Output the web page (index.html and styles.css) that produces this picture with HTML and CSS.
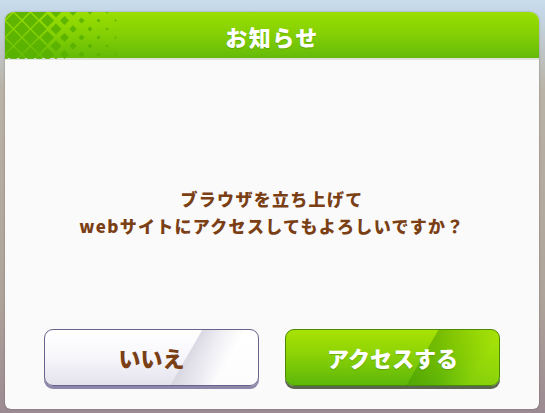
FILE: index.html
```html
<!DOCTYPE html>
<html lang="ja">
<head>
<meta charset="utf-8">
<link rel="stylesheet" href="styles.css">
</head>
<body>
<div class="dialog">
  <div class="header">
    <svg class="pattern" width="130" height="47" viewBox="0 0 130 47">
      <defs><path id="d" d="M0,-1 L1,0 L0,1 L-1,0Z"/></defs>
      <g fill="#58b000" opacity="0.85">
        <use href="#d" transform="translate(0,0) scale(7.5)"/>
        <use href="#d" transform="translate(17,0) scale(7.5)"/>
        <use href="#d" transform="translate(34,0) scale(7.5)"/>
        <use href="#d" transform="translate(51,0) scale(5.5)"/>
        <use href="#d" transform="translate(68,0) scale(3.7)"/>
        <use href="#d" transform="translate(85,0) scale(2.4)"/>
        <use href="#d" transform="translate(102,0) scale(1.6)"/>

        <use href="#d" transform="translate(8.5,8.5) scale(7.5)"/>
        <use href="#d" transform="translate(25.5,8.5) scale(7.5)"/>
        <use href="#d" transform="translate(42.5,8.5) scale(6.5)"/>
        <use href="#d" transform="translate(59.5,8.5) scale(4.5)"/>
        <use href="#d" transform="translate(76.5,8.5) scale(3)"/>
        <use href="#d" transform="translate(93.5,8.5) scale(2)"/>
        <use href="#d" transform="translate(110.5,8.5) scale(1.2)"/>

        <use href="#d" transform="translate(0,17) scale(7.5)"/>
        <use href="#d" transform="translate(17,17) scale(7.5)"/>
        <use href="#d" transform="translate(34,17) scale(7.5)"/>
        <use href="#d" transform="translate(51,17) scale(5.5)"/>
        <use href="#d" transform="translate(68,17) scale(3.7)"/>
        <use href="#d" transform="translate(85,17) scale(2.4)"/>
        <use href="#d" transform="translate(102,17) scale(1.6)"/>

        <use href="#d" transform="translate(8.5,25.5) scale(7.5)"/>
        <use href="#d" transform="translate(25.5,25.5) scale(7.5)"/>
        <use href="#d" transform="translate(42.5,25.5) scale(6.5)"/>
        <use href="#d" transform="translate(59.5,25.5) scale(4.5)"/>
        <use href="#d" transform="translate(76.5,25.5) scale(3)"/>
        <use href="#d" transform="translate(93.5,25.5) scale(2)"/>
        <use href="#d" transform="translate(110.5,25.5) scale(1.2)"/>

        <use href="#d" transform="translate(0,34) scale(7.5)"/>
        <use href="#d" transform="translate(17,34) scale(7.5)"/>
        <use href="#d" transform="translate(34,34) scale(7.5)"/>
        <use href="#d" transform="translate(51,34) scale(5.5)"/>
        <use href="#d" transform="translate(68,34) scale(3.7)"/>
        <use href="#d" transform="translate(85,34) scale(2.4)"/>
        <use href="#d" transform="translate(102,34) scale(1.6)"/>

        <use href="#d" transform="translate(8.5,42.5) scale(7.5)"/>
        <use href="#d" transform="translate(25.5,42.5) scale(7.5)"/>
        <use href="#d" transform="translate(42.5,42.5) scale(6.5)"/>
        <use href="#d" transform="translate(59.5,42.5) scale(4.5)"/>
        <use href="#d" transform="translate(76.5,42.5) scale(3)"/>
        <use href="#d" transform="translate(93.5,42.5) scale(2)"/>
        <use href="#d" transform="translate(110.5,42.5) scale(1.2)"/>

        <use href="#d" transform="translate(0,51) scale(7.5)"/>
        <use href="#d" transform="translate(17,51) scale(7.5)"/>
        <use href="#d" transform="translate(34,51) scale(7.5)"/>
        <use href="#d" transform="translate(51,51) scale(5.5)"/>
      </g>
    </svg>
    <h1 class="title">お知らせ</h1>
  </div>
  <div class="content">
    <p class="message">ブラウザを立ち上げて<br>webサイトにアクセスしてもよろしいですか？</p>
    <div class="actions">
      <button class="btn btn-no">いいえ</button>
      <button class="btn btn-yes">アクセスする</button>
    </div>
  </div>
</div>
</body>
</html>
```

FILE: styles.css
```css
* { box-sizing: border-box; }
html, body { margin: 0; padding: 0; }
body {
  width: 545px;
  height: 413px;
  overflow: hidden;
  font-family: "Noto Sans CJK JP", "Noto Sans", sans-serif;
  background: linear-gradient(to bottom, #c9dded 0, #c4d6e4 14px, #b9b2a6 90px, #aea39a 300px, #9c8a92 413px);
  padding: 12px 6px 4px 5px;
}
.dialog {
  width: 534px;
  height: 397px;
  border-radius: 9px 9px 6px 6px;
  overflow: hidden;
  background: #fafafa;
  box-shadow: 0 0 2px rgba(60, 50, 60, 0.45);
  display: flex;
  flex-direction: column;
}
.header {
  position: relative;
  height: 48px;
  flex: none;
  background: linear-gradient(to bottom, #9ade02 0%, #86d104 45%, #64bb09 100%);
  border-bottom: 2px solid #dfe3da;
  display: flex;
  align-items: center;
  justify-content: center;
}
.pattern {
  position: absolute;
  left: 0;
  top: 0;
}
.title {
  position: relative;
  margin: 0;
  font-size: 22px;
  font-weight: 900;
  letter-spacing: 1.5px;
  color: #ffffff;
  line-height: 1;
  padding-top: 1px;
  text-shadow: 0 1px 1px rgba(60, 110, 0, 0.35);
}
.content {
  flex: 1;
  display: flex;
  flex-direction: column;
  align-items: center;
  padding: 0 0 23px;
}
.message {
  margin: 125px 0 0;
  text-align: center;
  font-size: 17px;
  line-height: 27px;
  font-weight: 900;
  letter-spacing: 1.3px;
  color: #7a3f15;
}
.actions {
  margin-top: auto;
  display: flex;
  gap: 26px;
}
.btn {
  width: 215px;
  height: 57px;
  border-radius: 9px;
  font-family: "Noto Sans CJK JP", "Noto Sans", sans-serif;
  font-size: 22px;
  font-weight: 900;
  padding: 0 0 2px;
  cursor: pointer;
}
.btn-no {
  color: #7a3f15;
  border: 1.5px solid #69628a;
  background:
    linear-gradient(120deg, rgba(255,255,255,0) 0%, rgba(255,255,255,0) 64%, rgba(215,213,224,0.9) 64.5%, rgba(235,234,240,0.6) 74%, rgba(255,255,255,0.9) 82%, rgba(255,255,255,0.9) 100%),
    linear-gradient(to bottom, #ffffff 0%, #f7f6fa 50%, #e4e2ec 100%);
  box-shadow: 0 3px 0 #8d87ab;
}
.btn-yes {
  color: #ffffff;
  border: 1.5px solid #4a8a04;
  background:
    linear-gradient(120deg, rgba(0,0,0,0) 0%, rgba(0,0,0,0) 62%, rgba(70,150,0,0.5) 62.5%, rgba(90,170,0,0.3) 74%, rgba(170,230,10,0.5) 88%, rgba(170,230,10,0.6) 100%),
    linear-gradient(to bottom, #a8e204 0%, #8fd405 40%, #5db70a 100%);
  box-shadow: 0 3px 0 #5b6650;
  text-shadow: 0 1px 1px rgba(40, 90, 0, 0.3);
}
```
